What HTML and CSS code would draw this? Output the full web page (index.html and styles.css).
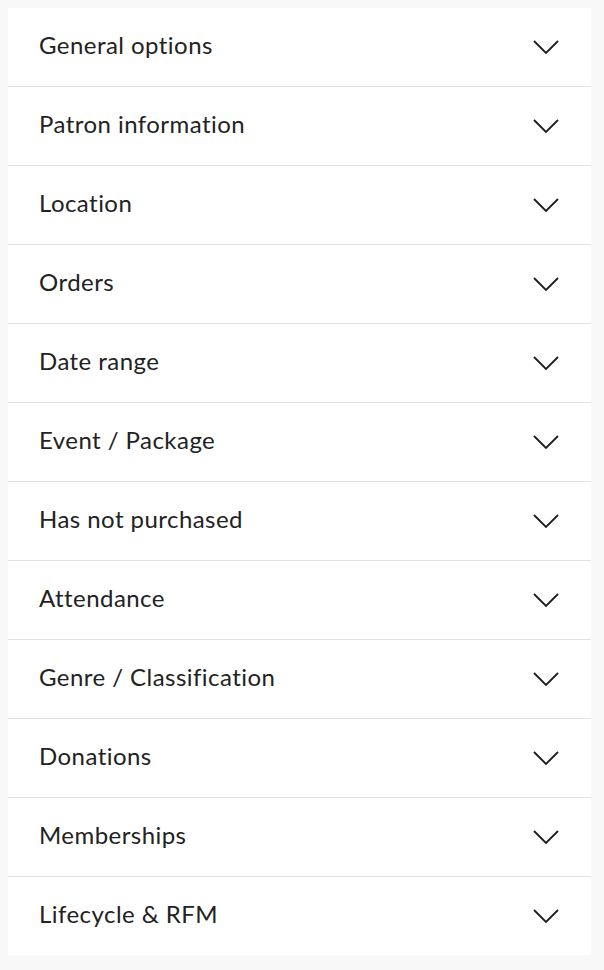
FILE: index.html
```html
<!DOCTYPE html>
<html lang="en">
	<head>
		<meta charset="UTF-8" />
		<meta name="viewport" content="width=device-width, initial-scale=1.0" />
		<title>Filters</title>
		<link rel="stylesheet" href="styles.css">
	</head>
	<body>
		<div class="filter-panel">
			<div class="filter-row"><span class="filter-label">General options</span><svg class="chevron" viewBox="0 0 26 14"><path d="M1 1 L13 13 L25 1" /></svg></div>
			<div class="filter-row"><span class="filter-label">Patron information</span><svg class="chevron" viewBox="0 0 26 14"><path d="M1 1 L13 13 L25 1" /></svg></div>
			<div class="filter-row"><span class="filter-label">Location</span><svg class="chevron" viewBox="0 0 26 14"><path d="M1 1 L13 13 L25 1" /></svg></div>
			<div class="filter-row"><span class="filter-label">Orders</span><svg class="chevron" viewBox="0 0 26 14"><path d="M1 1 L13 13 L25 1" /></svg></div>
			<div class="filter-row"><span class="filter-label">Date range</span><svg class="chevron" viewBox="0 0 26 14"><path d="M1 1 L13 13 L25 1" /></svg></div>
			<div class="filter-row"><span class="filter-label">Event / Package</span><svg class="chevron" viewBox="0 0 26 14"><path d="M1 1 L13 13 L25 1" /></svg></div>
			<div class="filter-row"><span class="filter-label">Has not purchased</span><svg class="chevron" viewBox="0 0 26 14"><path d="M1 1 L13 13 L25 1" /></svg></div>
			<div class="filter-row"><span class="filter-label">Attendance</span><svg class="chevron" viewBox="0 0 26 14"><path d="M1 1 L13 13 L25 1" /></svg></div>
			<div class="filter-row"><span class="filter-label">Genre / Classification</span><svg class="chevron" viewBox="0 0 26 14"><path d="M1 1 L13 13 L25 1" /></svg></div>
			<div class="filter-row"><span class="filter-label">Donations</span><svg class="chevron" viewBox="0 0 26 14"><path d="M1 1 L13 13 L25 1" /></svg></div>
			<div class="filter-row"><span class="filter-label">Memberships</span><svg class="chevron" viewBox="0 0 26 14"><path d="M1 1 L13 13 L25 1" /></svg></div>
			<div class="filter-row"><span class="filter-label">Lifecycle &amp; RFM</span><svg class="chevron" viewBox="0 0 26 14"><path d="M1 1 L13 13 L25 1" /></svg></div>
		</div>
	</body>
</html>
```

FILE: styles.css
```css
body {
	margin: 0;
	padding: 8px;
	background: #f8f8f8;
	font-family: Lato, "Noto Sans", sans-serif;
}
.filter-panel {
	width: 583px;
	background: #fff;
	border-radius: 0 3px 3px 0;
}
.filter-row {
	display: flex;
	align-items: center;
	justify-content: space-between;
	height: 78px;
	padding: 0 32px 0 31px;
	border-bottom: 1px solid #e2e2e2;
	box-sizing: content-box;
}
.filter-row:last-child {
	border-bottom: none;
}
.filter-label {
	font-size: 24px;
	line-height: 28px;
	padding-bottom: 5px;
	color: #222;
	letter-spacing: 0.45px;
}
.chevron {
	width: 26px;
	height: 14px;
	fill: none;
	stroke: #1e1e1e;
	stroke-width: 1.8;
}
```
